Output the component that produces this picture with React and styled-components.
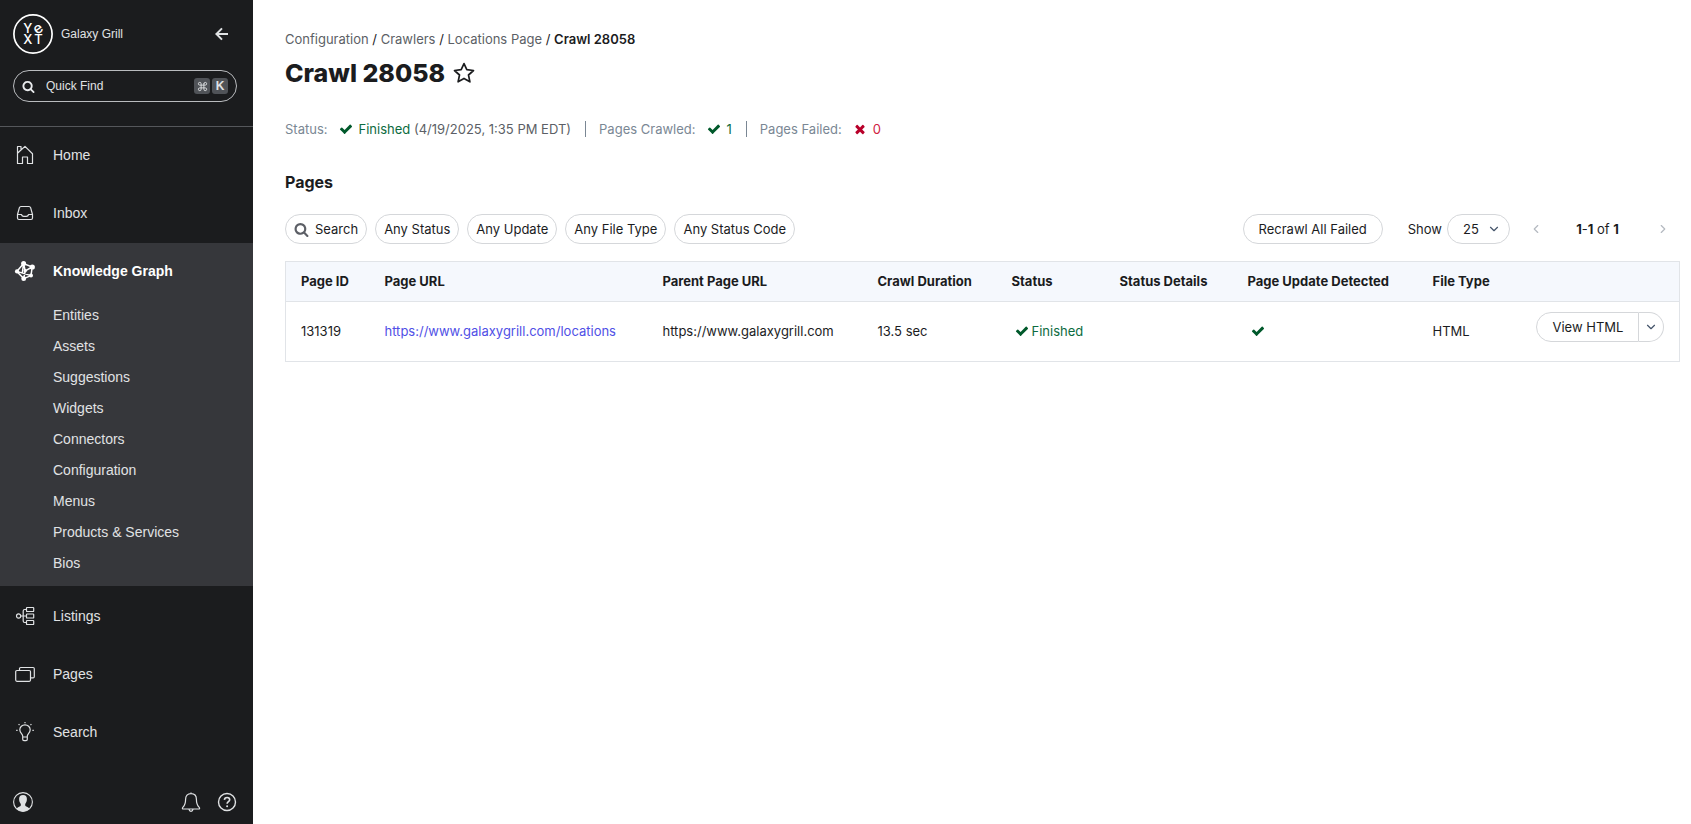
import styled, { createGlobalStyle } from "styled-components";
import { ChevronDown, ChevronLeft, ChevronRight, Command } from "lucide-react";

const subItems = [
  "Entities",
  "Assets",
  "Suggestions",
  "Widgets",
  "Connectors",
  "Configuration",
  "Menus",
  "Products & Services",
  "Bios",
];

const filters = ["Any Status", "Any Update", "Any File Type", "Any Status Code"];

const columns = [
  { title: "Page ID", width: 84 },
  { title: "Page URL" },
  { title: "Parent Page URL", width: 215 },
  { title: "Crawl Duration", width: 134 },
  { title: "Status", width: 108 },
  { title: "Status Details", width: 128 },
  { title: "Page Update Detected", width: 185 },
  { title: "File Type", width: 103 },
  { title: "", width: 159 },
];

const Check = () => (
  <Glyph $size={14} $color="#00592b" viewBox="0 0 1792 1792">
    <path d="M1671 566q0 40-28 68l-724 724-136 136q-28 28-68 28t-68-28l-136-136-362-362q-28-28-28-68t28-68l136-136q28-28 68-28t68 28l294 295 656-657q28-28 68-28t68 28l136 136q28 28 28 68z" />
  </Glyph>
);

const Times = () => (
  <Glyph $size={14} $color="#b8002a" viewBox="0 0 1792 1792">
    <path d="M1490 1322q0 40-28 68l-136 136q-28 28-68 28t-68-28l-294-294-294 294q-28 28-68 28t-68-28l-136-136q-28-28-28-68t28-68l294-294-294-294q-28-28-28-68t28-68l136-136q28-28 68-28t68 28l294 294 294-294q28-28 68-28t68 28l136 136q28 28 28 68t-28 68l-294 294 294 294q28 28 28 68z" />
  </Glyph>
);

const Magnifier = ({ size, color }) => (
  <Glyph $size={size} $color={color} viewBox="0 0 1792 1792">
    <path d="M1216 832q0-185-131.5-316.5t-316.5-131.5-316.5 131.5-131.5 316.5 131.5 316.5 316.5 131.5 316.5-131.5 131.5-316.5zm512 832q0 52-38 90t-90 38q-54 0-90-38l-343-342q-179 124-399 124-143 0-273.5-55.5t-225-150-150-225-55.5-273.5 55.5-273.5 150-225 225-150 273.5-55.5 273.5 55.5 225 150 150 225 55.5 273.5q0 220-124 399l343 343q37 37 37 90z" />
  </Glyph>
);

const Logo = () => (
  <LogoSvg viewBox="0 0 40 40" aria-label="Yext">
    <circle cx="20" cy="20" r="19.1" fill="none" stroke="#fff" strokeWidth="1.7" />
    <text>
      <tspan x="14.9" y="19.3">Y</tspan>
      <tspan x="14.9" y="29.9">X</tspan>
      <tspan x="25.4" y="29.9">T</tspan>
    </text>
    <text x="25.2" y="19.2" fontSize="15" transform="rotate(-35 25.2 15)">
      e
    </text>
  </LogoSvg>
);

const HomeIcon = () => (
  <LineIcon viewBox="0 0 20 20">
    <path d="M2.5 18.5V1.5H6V5L10 1.4 17.5 8.7V18.5H12.5V12H7.5V18.5ZM2.5 8.3 6.2 4.8" />
  </LineIcon>
);

const InboxIcon = () => (
  <LineIcon viewBox="0 0 20 20">
    <path d="M6 3.5H14Q15.2 3.5 15.6 4.7L17.5 11.5V15Q17.5 16.5 16 16.5H4Q2.5 16.5 2.5 15V11.5L4.4 4.7Q4.8 3.5 6 3.5ZM2.5 11.5H6.4C6.8 12.8 7.6 13.4 8.6 13.4H11.4C12.4 13.4 13.2 12.8 13.6 11.5H17.5" />
  </LineIcon>
);

const GraphIcon = () => (
  <LineIcon viewBox="0 0 20 20" $color="#fff">
    <path
      strokeWidth="1.5"
      d="M8.6 2.6 17.2 6 16 14.6 8.7 17.6 1.8 10.4ZM8.6 2.6 10.2 9.8 17.2 6M1.8 10.4 16 14.6M10.2 9.8 8.7 17.6M8.6 2.6 7.4 11.4"
    />
    <g fill="#fff" stroke="none">
      <circle cx="8.6" cy="2.6" r="2.5" />
      <circle cx="17.3" cy="6" r="2.6" />
      <circle cx="2" cy="10.4" r="2.1" />
      <circle cx="16" cy="14.6" r="2" />
      <circle cx="8.7" cy="17.7" r="2.4" />
      <circle cx="10.2" cy="9.8" r="1.7" />
    </g>
  </LineIcon>
);

const ListingsIcon = () => (
  <LineIcon viewBox="0 0 20 20">
    <circle cx="3.6" cy="10" r="2.1" />
    <rect x="11.5" y="1.5" width="7.2" height="4" rx=".6" />
    <rect x="11.5" y="8" width="7.2" height="4" rx=".6" />
    <rect x="11.5" y="14.5" width="7.2" height="4" rx=".6" />
    <path d="M5.7 10H11.5M11.5 3.5H9.7Q8.2 3.5 8.2 5V15Q8.2 16.5 9.7 16.5H11.5" />
  </LineIcon>
);

const PagesIcon = () => (
  <LineIcon viewBox="0 0 20 20">
    <rect x=".7" y="6.5" width="14.8" height="10.8" rx="1.2" />
    <path d="M4.5 6.5V4.7Q4.5 3.5 5.7 3.5H18.1Q19.3 3.5 19.3 4.7V12.7Q19.3 13.9 18.1 13.9H15.5" />
  </LineIcon>
);

const BulbIcon = () => (
  <LineIcon viewBox="0 0 20 20">
    <path d="M7.7 15V14C7.7 12 4.8 11 4.8 7.8A5.2 5 0 0 1 15.2 7.8C15.2 11 12.3 12 12.3 14V17.3Q12.3 18.7 11 18.7H9Q7.7 18.7 7.7 17.3ZM7.7 15H12.3" />
    <path d="M10 0V1.2M3.6 2.1 4.5 3M16.4 2.1 15.5 3M1.2 8.3H2.6M17.4 8.3H18.8" />
  </LineIcon>
);

const AvatarIcon = () => (
  <LineIcon viewBox="0 0 20 20">
    <circle cx="10" cy="10" r="9.4" strokeWidth="1.1" />
    <path
      fill="#e0e2e4"
      stroke="none"
      d="M10 3C12.6 3 14 4.6 13.9 7.1 13.9 9.6 13 11 12.2 12V13.6C12.6 14.7 15 15 16.4 16.4 14.8 18.3 12.6 19.4 10 19.4S5.2 18.3 3.6 16.4C5 15 7.4 14.7 7.8 13.6V12C7 11 6.1 9.6 6.1 7.1 6 4.6 7.4 3 10 3Z"
    />
  </LineIcon>
);

const BellIcon = () => (
  <LineIcon viewBox="0 0 20 20">
    <path
      strokeWidth="1.2"
      d="M10 1.6C6.5 1.6 4.6 4 4.6 7.3 4.6 11.6 3.6 13.6 1.8 15.4 1 16.3 1.4 17 2.3 17H17.7C18.6 17 19 16.3 18.2 15.4 16.4 13.6 15.4 11.6 15.4 7.3 15.4 4 13.5 1.6 10 1.6ZM10 .4V1.6M8 17.4Q8.4 19.3 10 19.3T12 17.4"
    />
  </LineIcon>
);

const HelpIcon = () => (
  <LineIcon viewBox="0 0 20 20">
    <circle cx="10" cy="10" r="8.5" strokeWidth="1.4" />
    <path strokeWidth="1.6" d="M7.4 7.9C7.5 6.4 8.6 5.5 10.1 5.5 11.6 5.5 12.7 6.4 12.7 7.8 12.7 9.6 10.1 9.7 10.1 11.7" />
    <circle cx="10.1" cy="14.2" r="1" fill="#e0e2e4" stroke="none" />
  </LineIcon>
);

const NavItem = ({ icon, text, active }) => (
  <NavLink href="#" $active={active}>
    {icon}
    <span>{text}</span>
  </NavLink>
);

const Sidebar = () => (
  <SidebarWrapper>
    <Brand>
      <Logo />
      <BrandName>Galaxy Grill</BrandName>
      <IconButton aria-label="Collapse menu">
        <ArrowSvg viewBox="0 0 14 14">
          <path d="M13 7H1.6M7 1.4 1.4 7 7 12.6" />
        </ArrowSvg>
      </IconButton>
    </Brand>
    <QuickFind>
      <Magnifier size={13} color="#e8eaec" />
      <input type="text" placeholder="Quick Find" />
      <Keys>
        <kbd>
          <Command size={11} strokeWidth={2} />
        </kbd>
        <kbd>K</kbd>
      </Keys>
    </QuickFind>
    <Nav>
      <NavItem icon={<HomeIcon />} text="Home" />
      <NavItem icon={<InboxIcon />} text="Inbox" />
      <NavGroup>
        <NavItem icon={<GraphIcon />} text="Knowledge Graph" active />
        {subItems.map((item) => (
          <SubLink href="#" key={item}>
            {item}
          </SubLink>
        ))}
      </NavGroup>
      <NavItem icon={<ListingsIcon />} text="Listings" />
      <NavItem icon={<PagesIcon />} text="Pages" />
      <NavItem icon={<BulbIcon />} text="Search" />
    </Nav>
    <SidebarFooter>
      <IconButton aria-label="Account">
        <AvatarIcon />
      </IconButton>
      <FooterActions>
        <IconButton aria-label="Notifications">
          <BellIcon />
        </IconButton>
        <IconButton aria-label="Help">
          <HelpIcon />
        </IconButton>
      </FooterActions>
    </SidebarFooter>
  </SidebarWrapper>
);

const Toolbar = () => (
  <ToolbarWrapper>
    <Filters>
      <FilterButton>
        <Magnifier size={15} color="#5c5f66" />
        Search
      </FilterButton>
      {filters.map((filter) => (
        <FilterButton key={filter}>{filter}</FilterButton>
      ))}
    </Filters>
    <PillButton>Recrawl All Failed</PillButton>
    <PageSize>
      <label htmlFor="page-size">Show</label>
      <SelectWrapper>
        <select id="page-size" defaultValue="25">
          <option>25</option>
          <option>50</option>
          <option>100</option>
        </select>
        <ChevronDown size={14} />
      </SelectWrapper>
    </PageSize>
    <Pager>
      <IconButton aria-label="Previous page" disabled>
        <ChevronLeft size={14} />
      </IconButton>
      <span>
        <b>1</b>-<b>1</b> of <b>1</b>
      </span>
      <IconButton aria-label="Next page" disabled>
        <ChevronRight size={14} />
      </IconButton>
    </Pager>
  </ToolbarWrapper>
);

const PagesTable = () => (
  <Table>
    <colgroup>
      {columns.map((column, i) => (
        <Col key={i} $width={column.width} />
      ))}
    </colgroup>
    <thead>
      <tr>
        {columns.map((column, i) => (
          <th key={i}>{column.title}</th>
        ))}
      </tr>
    </thead>
    <tbody>
      <tr>
        <td>131319</td>
        <td>
          <a href="#">https://www.galaxygrill.com/locations</a>
        </td>
        <td>https://www.galaxygrill.com</td>
        <td>13.5 sec</td>
        <td>
          <CellStatus>
            <Check />
            Finished
          </CellStatus>
        </td>
        <td />
        <td>
          <CellStatus>
            <Check />
          </CellStatus>
        </td>
        <td>HTML</td>
        <ActionCell>
          <SplitButton>
            <button>View HTML</button>
            <button aria-label="More actions">
              <ChevronDown size={14} />
            </button>
          </SplitButton>
        </ActionCell>
      </tr>
    </tbody>
  </Table>
);

const App = () => {
  return (
    <>
      <GlobalStyle />
      <Layout>
        <Sidebar />
        <Main>
          <Breadcrumbs>
            <a href="#">Configuration</a> / <a href="#">Crawlers</a> /{" "}
            <a href="#">Locations Page</a> / <b>Crawl 28058</b>
          </Breadcrumbs>
          <TitleRow>
            <h1>Crawl 28058</h1>
            <IconButton aria-label="Favorite">
              <StarSvg viewBox="0 0 22 22">
                <path d="M11 1.6 13.8 7.7 20.5 8.5 15.5 13 16.9 19.8 11 16.4 5.1 19.8 6.5 13 1.5 8.5 8.2 7.7Z" />
              </StarSvg>
            </IconButton>
          </TitleRow>
          <StatusBar>
            <StatusItem>
              <span>Status:</span>
              <StatusValue $color="#0c6b40">
                <Check />
                <span>
                  Finished <small>(4/19/2025, 1:35 PM EDT)</small>
                </span>
              </StatusValue>
            </StatusItem>
            <StatusItem>
              <span>Pages Crawled:</span>
              <StatusValue $color="#0c6b40">
                <Check />
                <span>1</span>
              </StatusValue>
            </StatusItem>
            <StatusItem>
              <span>Pages Failed:</span>
              <StatusValue $color="#d0213f">
                <Times />
                <span>0</span>
              </StatusValue>
            </StatusItem>
          </StatusBar>
          <SectionTitle>Pages</SectionTitle>
          <Toolbar />
          <PagesTable />
        </Main>
      </Layout>
    </>
  );
};

const GlobalStyle = createGlobalStyle`
  * {
    box-sizing: border-box;
  }
  body {
    margin: 0;
    background: #fff;
    color: #1b1c1e;
    font-family: Inter, sans-serif;
    font-size: 13px;
    line-height: 20px;
  }
  button, input, select {
    font: inherit;
    color: inherit;
  }
  button {
    cursor: pointer;
  }
  a {
    text-decoration: none;
  }
`;

const Layout = styled.div`
  display: flex;
  min-height: 100vh;
`;

const Glyph = styled.svg`
  flex: none;
  display: block;
  width: ${({ $size }) => $size}px;
  height: ${({ $size }) => $size}px;
  fill: ${({ $color }) => $color};
`;

const LineIcon = styled.svg`
  flex: none;
  display: block;
  width: 20px;
  height: 20px;
  overflow: visible;
  fill: none;
  stroke: ${({ $color }) => $color || "#e0e2e4"};
  stroke-width: 1.2;
  stroke-linejoin: round;
`;

const IconButton = styled.button`
  display: flex;
  padding: 0;
  border: 0;
  background: none;
`;

const SidebarWrapper = styled.aside`
  position: sticky;
  top: 0;
  flex: none;
  display: flex;
  flex-direction: column;
  width: 253px;
  height: 100vh;
  background: #1b1c1e;
  color: #e0e2e4;
  font-family: "Liberation Sans", Arial, sans-serif;
  font-size: 14px;
`;

const Brand = styled.div`
  display: flex;
  align-items: center;
  gap: 8px;
  padding: 14px 24px 16px 13px;
`;

const BrandName = styled.span`
  flex: 1;
  font-size: 12px;
`;

const LogoSvg = styled.svg`
  width: 40px;
  height: 40px;
  fill: #fff;
  font-family: Inter, sans-serif;
  font-size: 13px;
  font-weight: 500;
  text-anchor: middle;
`;

const ArrowSvg = styled.svg`
  width: 14px;
  height: 14px;
  fill: none;
  stroke: #e0e2e4;
  stroke-width: 2;
`;

const QuickFind = styled.label`
  display: flex;
  align-items: center;
  height: 32px;
  margin: 0 16px 24px 13px;
  padding: 0 8px;
  border: 1px solid #b9bbbe;
  border-radius: 16px;
  font-size: 12px;
  input {
    flex: 1;
    min-width: 0;
    margin-left: 11px;
    padding: 0;
    border: 0;
    outline: 0;
    background: none;
  }
  input::placeholder {
    color: #e0e2e4;
  }
`;

const Keys = styled.span`
  display: flex;
  gap: 2px;
  kbd {
    display: flex;
    align-items: center;
    justify-content: center;
    width: 16px;
    height: 16px;
    border-radius: 3px;
    background: #505358;
    font-family: inherit;
    font-weight: bold;
  }
`;

const Nav = styled.nav`
  border-top: 1px solid #55575b;
`;

const NavLink = styled.a`
  display: flex;
  align-items: center;
  gap: 18px;
  height: 58px;
  padding: 0 0 2px 15px;
  color: ${({ $active }) => ($active ? "#fff" : "#e0e2e4")};
  font-weight: ${({ $active }) => ($active ? "bold" : "normal")};
`;

const NavGroup = styled.div`
  margin-bottom: 2px;
  padding-bottom: 6px;
  background: #36373b;
`;

const SubLink = styled.a`
  display: block;
  padding: 0 0 2px 53px;
  line-height: 29px;
  color: #e0e2e4;
`;

const SidebarFooter = styled.div`
  display: flex;
  justify-content: space-between;
  margin-top: auto;
  padding: 12px 16px 12px 13px;
`;

const FooterActions = styled.div`
  display: flex;
  gap: 16px;
`;

const Main = styled.main`
  flex: 1;
  min-width: 0;
  padding: 29px 11px 32px 32px;
`;

const Breadcrumbs = styled.nav`
  a {
    color: #5c5f66;
  }
  b {
    font-weight: 600;
  }
`;

const TitleRow = styled.div`
  display: flex;
  align-items: center;
  gap: 8px;
  margin: 8px 0 30px;
  h1 {
    margin: 0;
    font-size: 25px;
    line-height: 32px;
    font-weight: 800;
  }
`;

const StarSvg = styled.svg`
  width: 22px;
  height: 22px;
  fill: none;
  stroke: #1b1c1e;
  stroke-width: 1.7;
  stroke-linejoin: round;
`;

const StatusBar = styled.div`
  display: flex;
`;

const StatusItem = styled.div`
  display: flex;
  align-items: center;
  gap: 11px;
  color: #7a8794;
  & + & {
    margin-left: 14px;
  }
  & + &::before {
    content: "";
    width: 1px;
    height: 16px;
    margin-right: 2px;
    background: #7a8794;
  }
`;

const StatusValue = styled.span`
  display: flex;
  align-items: center;
  gap: 6px;
  color: ${({ $color }) => $color};
  small {
    font-size: inherit;
    color: #5c5f66;
  }
`;

const SectionTitle = styled.h2`
  margin: 31px 0 20px;
  font-size: 16px;
  line-height: 24px;
  font-weight: 700;
`;

const ToolbarWrapper = styled.div`
  display: flex;
  align-items: center;
  margin-bottom: 17px;
`;

const Filters = styled.div`
  flex: 1;
  display: flex;
  gap: 8px;
`;

const PillButton = styled.button`
  display: flex;
  align-items: center;
  height: 30px;
  padding: 0 15px;
  border: 1px solid #d5d7da;
  border-radius: 15px;
  background: #fff;
  white-space: nowrap;
`;

const FilterButton = styled(PillButton)`
  gap: 6px;
  padding: 0 8px;
`;

const PageSize = styled.div`
  display: flex;
  align-items: center;
  gap: 5px;
  margin: 0 19px 0 25px;
`;

const SelectWrapper = styled.span`
  position: relative;
  select {
    appearance: none;
    display: block;
    width: 63px;
    height: 30px;
    padding: 0 16px 0 15px;
    border: 1px solid #d5d7da;
    border-radius: 15px;
    background: #fff;
  }
  svg {
    position: absolute;
    top: 8px;
    right: 9px;
    color: #44546a;
    pointer-events: none;
  }
`;

const Pager = styled.div`
  display: flex;
  align-items: center;
  justify-content: space-between;
  width: 141px;
  margin-right: 10px;
  span {
    padding-right: 4px;
  }
  b {
    font-weight: 700;
  }
  button {
    color: #b4b9c0;
  }
`;

const Table = styled.table`
  width: 100%;
  table-layout: fixed;
  border-collapse: collapse;
  border: 1px solid #e1e4e8;
  th,
  td {
    padding: 0 0 2px 15px;
    text-align: left;
    white-space: nowrap;
  }
  th {
    height: 40px;
    background: #f5f8fd;
    font-weight: 700;
  }
  td {
    height: 60px;
    border-top: 1px solid #e1e4e8;
  }
  td a {
    color: #5050e6;
  }
`;

const Col = styled.col`
  width: ${({ $width }) => ($width ? `${$width}px` : "auto")};
`;

const CellStatus = styled.span`
  display: flex;
  align-items: center;
  gap: 3px;
  padding-left: 3px;
  color: #0c6b40;
`;

const ActionCell = styled.td`
  vertical-align: top;
`;

const SplitButton = styled.div`
  display: flex;
  margin-top: 10px;
  button {
    display: flex;
    align-items: center;
    height: 30px;
    padding: 0 15px 0 16px;
    border: 1px solid #d5d7da;
    border-radius: 15px 0 0 15px;
    background: #fff;
  }
  button + button {
    padding: 0 5px;
    border-left: 0;
    border-radius: 0 15px 15px 0;
    color: #44546a;
  }
`;

export default App;
